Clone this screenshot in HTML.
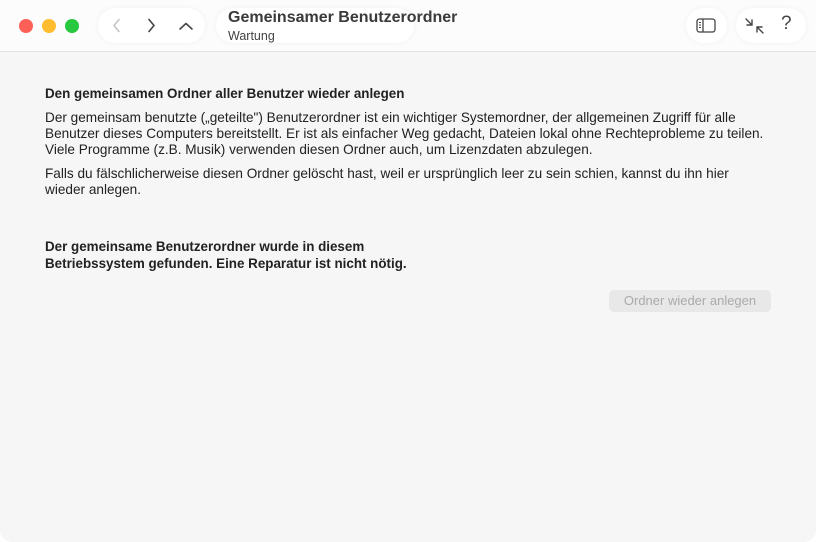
<!DOCTYPE html>
<html><head><meta charset="utf-8"><style>
html,body{margin:0;padding:0;width:816px;height:542px;background:#fff;overflow:hidden}
body{font-family:"Liberation Sans",Arial,sans-serif;color:#222}
.win{position:absolute;left:0;top:0;width:816px;height:542px;background:#f6f6f6;border-radius:0 0 12px 12px;overflow:hidden}
.tb{position:absolute;left:0;top:0;width:816px;height:51px;background:#fcfcfc;border-bottom:1px solid #e2e2e2}
.dot{position:absolute;top:19px;width:14px;height:14px;border-radius:50%}
.pill{position:absolute;background:#fff;border-radius:18px;box-shadow:0 0 6px rgba(0,0,0,0.05)}
.t1{position:absolute;left:228px;top:9px;font-size:16px;font-weight:bold;color:#3a3a3a}
.t2{position:absolute;left:228px;top:29px;font-size:12.5px;color:#444}
.c{position:absolute;left:45px;font-size:13.6px;line-height:16px;color:#222;white-space:nowrap}
.b{font-weight:bold;font-size:13.4px}
.btn{position:absolute;left:609px;top:290px;width:162px;height:22px;background:#e8e8e8;border-radius:5px;color:#aaa;font-size:13px;text-align:center;line-height:22px}
</style></head><body><div class="win">
<div class="tb">
<div class="dot" style="left:19px;background:#fe5f57"></div>
<div class="dot" style="left:42px;background:#febc2e"></div>
<div class="dot" style="left:65px;background:#28c840"></div>
<div class="pill" style="left:98px;top:8px;width:107px;height:35px"></div>
<svg style="position:absolute;left:98px;top:8px" width="107" height="35" fill="none" stroke-width="1.6" stroke-linecap="round" stroke-linejoin="round">
<path d="M21 11.5l-5 6 5 6" stroke="#c4c4c4"/>
<path d="M51 11.5l5 6-5 6" stroke="#444"/>
<path d="M82 21l6-5.5 6 5.5" stroke="#444"/></svg>
<div class="pill" style="left:216px;top:8px;width:198px;height:35px"></div>
<div class="t1">Gemeinsamer Benutzerordner</div>
<div class="t2">Wartung</div>
<div class="pill" style="left:686px;top:8px;width:41px;height:35px"></div>
<svg style="position:absolute;left:686px;top:8px" width="41" height="35" fill="none" stroke="#444" stroke-width="1.3">
<rect x="11" y="11" width="18" height="13" rx="2.5"/><path d="M17 11v13"/>
<path d="M13 14.5h2M13 17h2M13 19.5h2" stroke-width="1"/></svg>
<div class="pill" style="left:736px;top:8px;width:70px;height:35px"></div>
<svg style="position:absolute;left:736px;top:8px" width="70" height="35" fill="none" stroke="#444" stroke-width="1.4" stroke-linecap="round">
<path d="M10 11l6 6M16 12v5h-5M27 25l-6-6M21 24v-5h5"/></svg>
<div style="position:absolute;left:781px;top:13px;font-size:19px;color:#444">?</div>
</div>
<div class="c b" style="top:86px">Den gemeinsamen Ordner aller Benutzer wieder anlegen</div>
<div class="c" style="top:110px">Der gemeinsam benutzte („geteilte") Benutzerordner ist ein wichtiger Systemordner, der allgemeinen Zugriff für alle<br>Benutzer dieses Computers bereitstellt. Er ist als einfacher Weg gedacht, Dateien lokal ohne Rechteprobleme zu teilen.<br>Viele Programme (z.B. Musik) verwenden diesen Ordner auch, um Lizenzdaten abzulegen.</div>
<div class="c" style="top:166px">Falls du fälschlicherweise diesen Ordner gelöscht hast, weil er ursprünglich leer zu sein schien, kannst du ihn hier<br>wieder anlegen.</div>
<div class="c b" style="top:238px;line-height:17px">Der gemeinsame Benutzerordner wurde in diesem<br>Betriebssystem gefunden. Eine Reparatur ist nicht nötig.</div>
<div class="btn">Ordner wieder anlegen</div>
</div></body></html>
